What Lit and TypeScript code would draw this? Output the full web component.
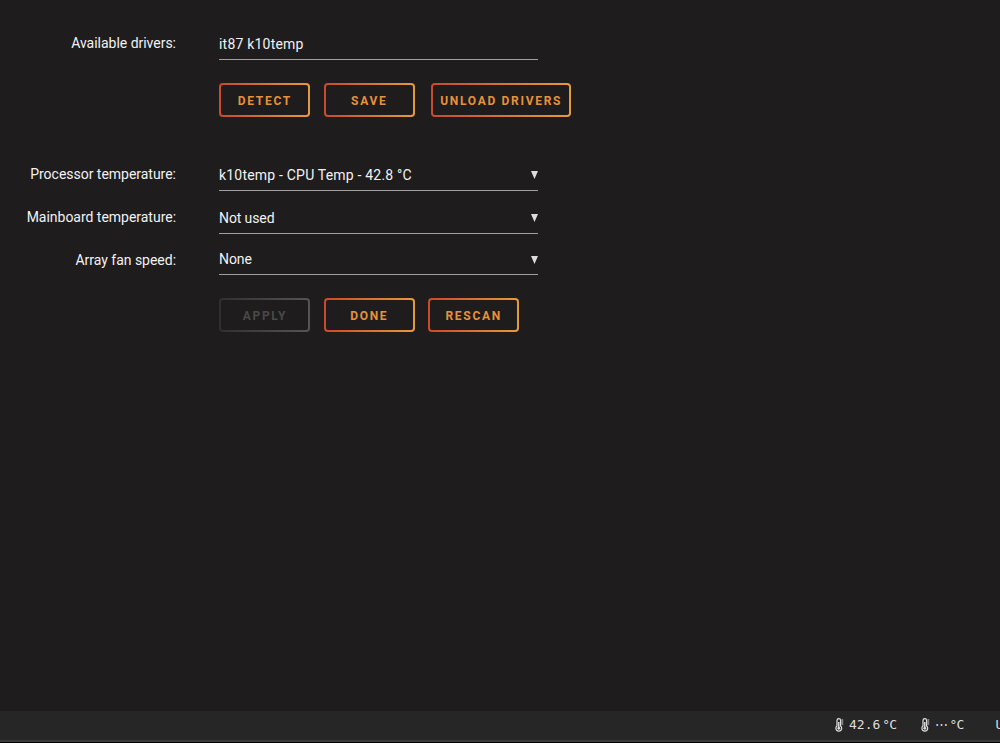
import { LitElement, html, css } from "lit";
import { customElement, property } from "lit/decorators.js";

@customElement("gradient-button")
class GradientButton extends LitElement {
  @property() label = "";
  @property({ type: Boolean, reflect: true }) disabled = false;
  @property({ type: Boolean, reflect: true }) wide = false;
  static styles = css`
    :host { display: block; width: 91px; flex: none; }
    :host([wide]) { width: 140px; margin-left: 3px; }
    button {
      display: block; box-sizing: border-box; width: 100%; height: 34px; padding: 1px 0 0 0;
      border: 2px solid transparent; border-radius: 4px;
      background: linear-gradient(#1e1c1d, #1e1c1d) padding-box,
        linear-gradient(90deg, #c94a2b, #e59a40) border-box;
      color: #e8913a; font: 700 12px/28px Roboto, sans-serif;
      letter-spacing: 1.7px; text-align: center; white-space: nowrap;
    }
    :host([disabled]) button {
      color: #4a4949;
      background: linear-gradient(#1e1c1d, #1e1c1d) padding-box,
        linear-gradient(90deg, #303030, #555) border-box;
    }
  `;
  render() {
    return html`<button ?disabled=${this.disabled}>${this.label}</button>`;
  }
}

@customElement("temp-reading")
class TempReading extends LitElement {
  @property() value = "";
  static styles = css`
    :host { display: flex; align-items: center; height: 26px; white-space: pre; }
    svg { width: 9px; height: 14px; margin-right: 5px; }
    .value { font: 13px/26px "DejaVu Sans Mono", monospace; }
    .dots { font: 13px/26px "Liberation Sans", sans-serif; letter-spacing: -1px; }
    .unit { margin-left: 2px; font: 13px/26px "DejaVu Sans Mono", monospace; letter-spacing: -0.8px; }
  `;
  render() {
    return html`
      <svg viewBox="0 0 9 14" fill="none" stroke="#dedede">
        <path d="M2 8V2.5a1.8 1.8 0 0 1 3.6 0V8a2.9 2.9 0 1 1-3.6 0z" stroke-width="1.2" />
        <path d="M3.8 4v6" stroke-width="1.4" />
        <circle cx="3.8" cy="10.3" r="1.4" fill="#dedede" stroke="none" />
        <path d="M6.4 2h1.8M6.4 4h1.8M6.4 6h1.8" stroke-width="1.1" />
      </svg><span class=${this.value === "⋯" ? "dots" : "value"}>${this.value}</span><span class="unit">°C</span>`;
  }
}

@customElement("app-root")
class AppRoot extends LitElement {
  static styles = css`
    :host {
      display: flex; flex-direction: column; height: 743px; width: 1000px; overflow: hidden;
      background: #1e1c1d; color: #f2f2f2; font: 14px/20px Roboto, sans-serif; letter-spacing: 0.2px;
    }
    main { flex: 1; padding-top: 29px; }
    .row { display: grid; grid-template-columns: 176px 319px; column-gap: 43px; height: 43px; }
    .last { height: 42px; }
    .label { text-align: right; padding-top: 4px; white-space: nowrap; letter-spacing: -0.02px; }
    .field {
      box-sizing: border-box; height: 31px; padding-top: 5px; border-bottom: 1px solid #a0a0a0;
      display: flex; justify-content: space-between;
    }
    .option { letter-spacing: -0.1px; }
    .raised { height: 30px; padding-top: 4px; }
    .last .raised { height: 29px; padding-top: 3px; }
    .arrow { width: 7px; height: 8px; margin-top: 6px; }
    .last .arrow { margin-top: 7px; }
    .buttons { display: flex; gap: 13.4px; margin-left: 219.4px; }
    .first { margin-top: 11px; }
    .temps { margin-top: 43px; }
    .second { margin-top: 10px; }
    footer {
      box-sizing: border-box; height: 32px; display: flex; align-items: flex-start;
      background: #262626; padding: 1px 0 0 835px; color: #dedede;
      border-bottom: 1px solid #000; box-shadow: inset 0 -2px #3a3a3a; letter-spacing: 0; white-space: nowrap;
    }
    .second-temp { margin-left: 25px; }
    .uptime { margin-left: 32px; font: 13px/26px "DejaVu Sans Mono", monospace; }
  `;

  private select(label: string, value: string, last = false) {
    return html`<div class="row ${last ? "last" : ""}">
      <div class="label">${label}</div>
      <div class="field ${last ? "raised" : ""}">
        <span class=${value.length < 10 ? "option" : ""}>${value}</span>
        <svg class="arrow" viewBox="0 0 7 8"><path d="M0 0h7L3.5 8z" fill="#dcdcdc" /></svg>
      </div>
    </div>`;
  }

  render() {
    return html`
      <main>
        <div class="row">
          <div class="label">Available drivers:</div>
          <div class="field"><span>it87 k10temp</span></div>
        </div>
        <div class="buttons first">
          <gradient-button label="DETECT"></gradient-button>
          <gradient-button label="SAVE"></gradient-button>
          <gradient-button wide label="UNLOAD DRIVERS"></gradient-button>
        </div>
        <div class="temps">
          ${this.select("Processor temperature:", "k10temp - CPU Temp - 42.8 °C")}
          ${this.select("Mainboard temperature:", "Not used")}
          ${this.select("Array fan speed:", "None", true)}
        </div>
        <div class="buttons second">
          <gradient-button disabled label="APPLY"></gradient-button>
          <gradient-button label="DONE"></gradient-button>
          <gradient-button label="RESCAN"></gradient-button>
        </div>
      </main>
      <footer>
        <temp-reading value="42.6"></temp-reading>
        <temp-reading class="second-temp" value="⋯"></temp-reading>
        <span class="uptime">U</span>
      </footer>`;
  }
}
